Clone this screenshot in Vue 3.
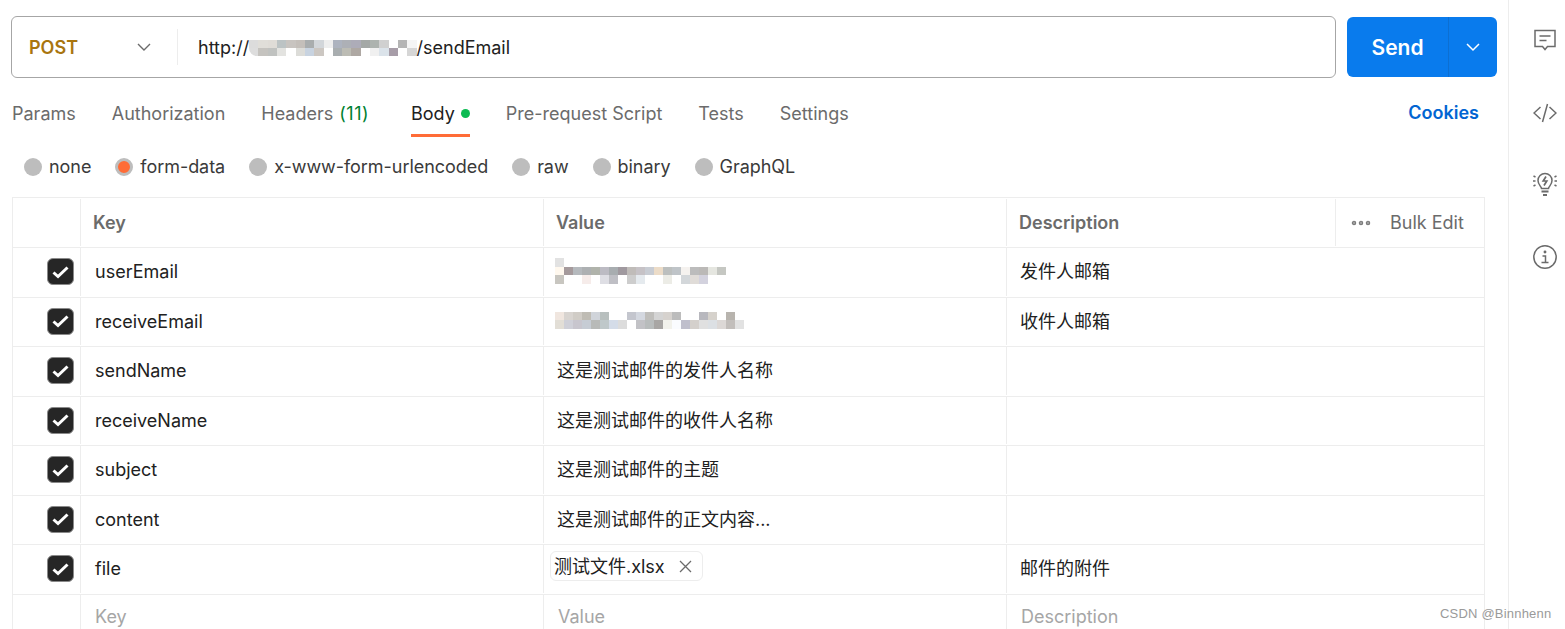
<script setup>
const tabs = [
  { label: 'Params' },
  { label: 'Authorization' },
  { label: 'Headers', count: '(11)' },
  { label: 'Body', active: true },
  { label: 'Pre-request Script' },
  { label: 'Tests' },
  { label: 'Settings' }
]
const radios = [
  { label: 'none' },
  { label: 'form-data', on: true },
  { label: 'x-www-form-urlencoded' },
  { label: 'raw' },
  { label: 'binary' },
  { label: 'GraphQL' }
]
const urlPix = [
  '#dcdcdc','#e0ded9','#dfdcd7','#bcc3c4','#c8c4c0','#c4bfba','#a9adae','#d2d6da','#eeeeee','#adb3bf','#adb0b6','#adacb8','#a4a8a6','#adb3af','#d0d0d0','#ffffff','#b5b5b5','#f5f5f5',
  '#dddddd','#c5c3bf','#c0c2c0','#e3e3e0','#ffffff','#dcdcd8','#c8d3e0','#ccc7c2','#ffffff','#a9aeb0','#bcbcb4','#aea8a3','#ffffff','#f0f0f0','#dbe3ea','#a79da8','#ffffff','#d6d6d6'
]
const w = '#ffffff'
const pix1 = [
  '#e2e2e2',w,w,w,w,w,w,w,w,w,w,w,w,w,w,w,w,w,w,
  '#fff8ee','#a59a9c','#b5b9bd','#adb0b2','#b0b3ab','#bcbbc3','#a8adb0','#a0999f','#c0bcb9','#c6c2c6','#c8ccd3','#ecdcc8','#bcbfbe','#bfc4c8','#f5f2ef','#bcbcbc','#bbb9b7','#e5e6e0','#c5c7c2',
  '#c8c6c0',w,w,'#f6ecea',w,'#dedee4','#bfbfc5',w,'#cdcdcd','#e5eaee',w,w,'#ecece6',w,'#d3d7da','#e0dcd8','#d3d2de',w,w
]
const pix2 = [
  '#f0e6df','#d8d4d0','#d0ccc6','#bfbcb4','#d0d4da','#b8bfbe',w,w,'#c4c6ce','#d4d8e0','#bfbebb','#d4d4d4','#d6d2ce','#bcbcbc',w,w,'#b8b8be','#d6d2cc',w,'#b8b4ae',w,w,
  '#e2ded6','#cfd0d8','#c8c6ce','#c6ccd4','#b8bab8','#bfc8ca','#d4dce8','#dcdcdc',w,'#c2c2c6','#b8bcbc','#a8a6a4','#f2f2ec','#fafcff','#bfbfcc','#d4d0cc','#e0e0e0','#dce0e4','#dcd8d6','#c2bebb','#e2e2e2',w
]
const rows = [
  { key: 'userEmail', pix: pix1, cols: 19, desc: '发件人邮箱' },
  { key: 'receiveEmail', pix: pix2, cols: 22, desc: '收件人邮箱' },
  { key: 'sendName', value: '这是测试邮件的发件人名称' },
  { key: 'receiveName', value: '这是测试邮件的收件人名称' },
  { key: 'subject', value: '这是测试邮件的主题' },
  { key: 'content', value: '这是测试邮件的正文内容...' },
  { key: 'file', chip: '测试文件.xlsx', desc: '邮件的附件' }
]
</script>

<template>
  <div class="page">
    <main class="main">
      <div class="urlbar">
        <div class="urlbox">
          <div class="method">
            <span>POST</span>
            <svg class="chev" width="16" height="16" viewBox="0 0 16 16" fill="none"><path d="M2 5l6 6 6-6" stroke="#6b6b6b" stroke-width="1.4"/></svg>
          </div>
          <div class="url">
            <span>http://</span>
            <div class="pix urlpix" :style="{ gridTemplateColumns: 'repeat(18, 9.3px)' }">
              <i v-for="(c, i) in urlPix" :key="i" :style="{ background: c }"></i>
            </div>
            <span>/sendEmail</span>
          </div>
        </div>
        <div class="send">
          <span class="send-label">Send</span>
          <span class="send-arrow">
            <svg width="16" height="16" viewBox="0 0 16 16" fill="none"><path d="M2 5l6 6 6-6" stroke="#fff" stroke-width="1.5"/></svg>
          </span>
        </div>
      </div>

      <div class="tabs">
        <div v-for="t in tabs" :key="t.label" class="tab" :class="{ active: t.active, wide: t.count }">
          {{ t.label }}<span v-if="t.count" class="count">{{ t.count }}</span><span v-if="t.active" class="dot"></span>
        </div>
        <div class="cookies">Cookies</div>
      </div>

      <div class="radios">
        <div v-for="r in radios" :key="r.label" class="radio" :class="{ on: r.on }">
          <span class="circle"></span>{{ r.label }}
        </div>
      </div>

      <div class="table">
        <div class="row head">
          <div class="cell check"></div>
          <div class="cell">Key</div>
          <div class="cell">Value</div>
          <div class="cell">Description</div>
          <div class="cell bulk">
            <svg width="20" height="6" viewBox="0 0 20 6" fill="none"><circle cx="3" cy="3" r="1.700" stroke="#7a7a7a" stroke-width="1.100" fill="#a0a0a0"/><circle cx="10" cy="3" r="1.700" stroke="#7a7a7a" stroke-width="1.100" fill="#a0a0a0"/><circle cx="17" cy="3" r="1.700" stroke="#7a7a7a" stroke-width="1.100" fill="#a0a0a0"/></svg>
            <span>Bulk Edit</span>
          </div>
        </div>
        <div v-for="r in rows" :key="r.key" class="row">
          <div class="cell check">
            <span class="box">
              <svg width="17" height="14" viewBox="0 0 17 14" fill="none"><path d="M1.500 7.500L6 11.500 15.500 2.500" stroke="#fff" stroke-width="3"/></svg>
            </span>
          </div>
          <div class="cell">{{ r.key }}</div>
          <div class="cell val">
            <div v-if="r.pix" class="pix cellpix" :style="{ gridTemplateColumns: `repeat(${r.cols}, 9px)` }">
              <i v-for="(c, i) in r.pix" :key="i" :style="{ background: c }"></i>
            </div>
            <span v-else-if="r.chip" class="chip">
              {{ r.chip }}
              <svg width="13" height="13" viewBox="0 0 13 13" fill="none"><path d="M1 1l11 11M12 1L1 12" stroke="#6b6b6b" stroke-width="1.300"/></svg>
            </span>
            <template v-else>{{ r.value }}</template>
          </div>
          <div class="cell desc">{{ r.desc }}</div>
        </div>
        <div class="row empty">
          <div class="cell check"></div>
          <div class="cell">Key</div>
          <div class="cell ph-val">Value</div>
          <div class="cell desc">Description</div>
        </div>
      </div>
    </main>

    <aside class="side">
      <svg width="24" height="24" viewBox="0 0 24 24" fill="none" stroke="#6b6b6b" stroke-width="1.500">
        <path d="M2 2.500h20v16h-7.500L12 21.500l-2.500-3H2z"/>
        <path d="M6.500 8h11M6.500 12.500h7"/>
      </svg>
      <svg class="nudge" width="24" height="24" viewBox="0 0 24 24" fill="none" stroke="#6b6b6b" stroke-width="1.500">
        <path d="M7.500 6L1 12l6.500 6M16.500 6L23 12l-6.500 6M14.500 3L9.500 21"/>
      </svg>
      <svg width="24" height="24" viewBox="0 0 24 24" fill="none" stroke="#6b6b6b" stroke-width="1.500">
        <path d="M8.500 16.500c0-2-3.500-3.500-3.500-8a7 7 0 0 1 14 0c0 4.500-3.500 6-3.500 8z"/>
        <path d="M8.500 19.500h7M10 23h4" stroke-width="2"/>
        <path d="M13 4.500l-2.800 4.500h3.600L11 13.500" stroke-width="1.700"/>
        <path d="M0.500 4l2 1M0 9h2.500M0.500 14l2-1M23.500 4l-2 1M24 9h-2.500M23.500 14l-2-1"/>
      </svg>
      <svg class="nudge" width="24" height="24" viewBox="0 0 24 24" fill="none" stroke="#6b6b6b" stroke-width="1.500">
        <circle cx="12" cy="12" r="11.200"/>
        <path d="M9.500 11h3v6.500M8.500 17.500h7"/>
        <circle cx="12" cy="7" r="0.700" fill="#6b6b6b"/>
      </svg>
    </aside>

    <div class="mark">CSDN @Binnhenn</div>
  </div>
</template>

<style scoped>
.page {
  display: flex;
  width: 1565px;
  height: 629px;
  overflow: hidden;
  position: relative;
  background: #fff;
  color: #212121;
  font-family: Inter, "Noto Sans CJK SC", sans-serif;
  font-size: 18px;
}
.main {
  width: 1508px;
  flex: none;
  box-sizing: border-box;
  padding: 16px 11px 0;
}
.urlbar {
  display: flex;
  align-items: center;
  gap: 11px;
}
.urlbox {
  width: 1325px;
  height: 62px;
  box-sizing: border-box;
  border: 1px solid #a6a6a6;
  border-radius: 6px;
  display: flex;
  align-items: center;
}
.method {
  width: 166px;
  height: 36px;
  box-sizing: border-box;
  padding: 0 25px 0 17px;
  border-right: 1px solid #ededed;
  display: flex;
  align-items: center;
  justify-content: space-between;
  color: #a9750f;
  font-weight: 600;
}
.url {
  display: flex;
  align-items: center;
  padding-left: 20px;
}
.pix {
  display: grid;
}
.pix i {
  display: block;
}
.urlpix {
  grid-auto-rows: 8px;
  border-bottom-left-radius: 8px;
  overflow: hidden;
  margin-top: 2px;
}
.send {
  width: 150px;
  height: 60px;
  border-radius: 6px;
  background: #097bed;
  color: #fff;
  display: flex;
  align-items: center;
}
.send-label {
  width: 101px;
  height: 100%;
  display: flex;
  align-items: center;
  justify-content: center;
  font-weight: 600;
  font-size: 21px;
  border-right: 1px solid #0c6fd2;
}
.send-arrow {
  flex: 1;
  display: flex;
  justify-content: center;
}
.tabs {
  height: 46px;
  margin-top: 12px;
  padding-left: 1px;
  padding-right: 18px;
  display: flex;
  align-items: flex-start;
  gap: 36px;
  color: #6b6b6b;
}
.tab {
  box-sizing: border-box;
  height: 47px;
  display: flex;
  align-items: center;
  white-space: nowrap;
  border-top: 2px solid transparent;
  border-bottom: 3px solid transparent;
}
.tab.wide {
  margin-right: 6px;
}
.tab.active {
  color: #212121;
  border-bottom-color: #ff6c37;
}
.count {
  color: #007f31;
  margin-left: 6px;
  letter-spacing: 0.500px;
}
.dot {
  width: 9px;
  height: 9px;
  border-radius: 50%;
  background: #0cbb52;
  margin-left: 6px;
}
.cookies {
  margin-left: auto;
  line-height: 46px;
  font-weight: 600;
  color: #0265d2;
}
.radios {
  height: 61px;
  display: flex;
  align-items: center;
  gap: 24px;
  padding-left: 13px;
  box-sizing: border-box;
  color: #3a3a3a;
  letter-spacing: -0.050px;
}
.radio {
  display: flex;
  align-items: center;
  gap: 7px;
  white-space: nowrap;
}
.circle {
  width: 18px;
  height: 18px;
  border-radius: 50%;
  background: #bdbdbd;
  box-sizing: border-box;
}
.on .circle {
  border: 3.500px solid #bdbdbd;
  background: #ff6c37;
}
.table {
  margin-left: 1px;
  width: 1473px;
  box-sizing: border-box;
  border: 1px solid #ededed;
  border-bottom: 0;
  height: 440px;
}
.row {
  display: grid;
  grid-template-columns: 68px 463px 463px 329px 1fr;
  height: 49.500px;
  box-sizing: border-box;
  border-bottom: 1px solid #ededed;
  padding-bottom: 1px;
  line-height: 22px;
}
.head {
  height: 50px;
  padding-top: 1px;
  font-weight: 600;
  color: #6b6b6b;
}
.cell {
  display: flex;
  align-items: center;
  border-right: 1px solid #ededed;
  white-space: nowrap;
  box-sizing: border-box;
  padding: 1px 0 0 14px;
}
.head .cell {
  padding: 0 0 0 12px;
}
.row .val,
.row .desc {
  padding-left: 13px;
}
.row .check {
  padding: 0 6px 0 0;
  justify-content: flex-end;
}
.box {
  width: 27px;
  height: 27px;
  box-sizing: border-box;
  border: 1px solid #8a8a8a;
  border-radius: 6px;
  background: #262626;
  display: flex;
  align-items: center;
  justify-content: center;
}
.desc {
  grid-column: span 2;
  border-right: 0;
}
.head .bulk {
  border-right: 0;
  padding-left: 15px;
  gap: 19px;
  font-weight: 400;
}
.row .val {
  position: relative;
}
.cellpix {
  grid-auto-rows: 8.500px;
  margin: -3px 0 0 -2px;
}
.chip {
  display: inline-flex;
  align-items: center;
  gap: 14px;
  height: 30px;
  box-sizing: border-box;
  margin: -7px 0 0 -7px;
  padding: 2px 10px 0 3px;
  border: 1px solid #ededed;
  border-radius: 6px;
}
.empty {
  color: #a6a6a6;
  height: 44px;
  border-bottom: 0;
}
.empty .desc {
  padding-left: 14px;
}
.side {
  flex: 1;
  border-left: 1px solid #ededed;
  box-sizing: border-box;
  padding: 28px 0 0 24px;
  display: flex;
  flex-direction: column;
  gap: 48px;
}
.nudge {
  transform: translateY(1px);
}
.mark {
  position: absolute;
  left: 1440px;
  top: 606px;
  font-family: "Liberation Sans", sans-serif;
  font-size: 13px;
  letter-spacing: 0.200px;
  color: #9a9a9a;
  white-space: nowrap;
}
</style>
